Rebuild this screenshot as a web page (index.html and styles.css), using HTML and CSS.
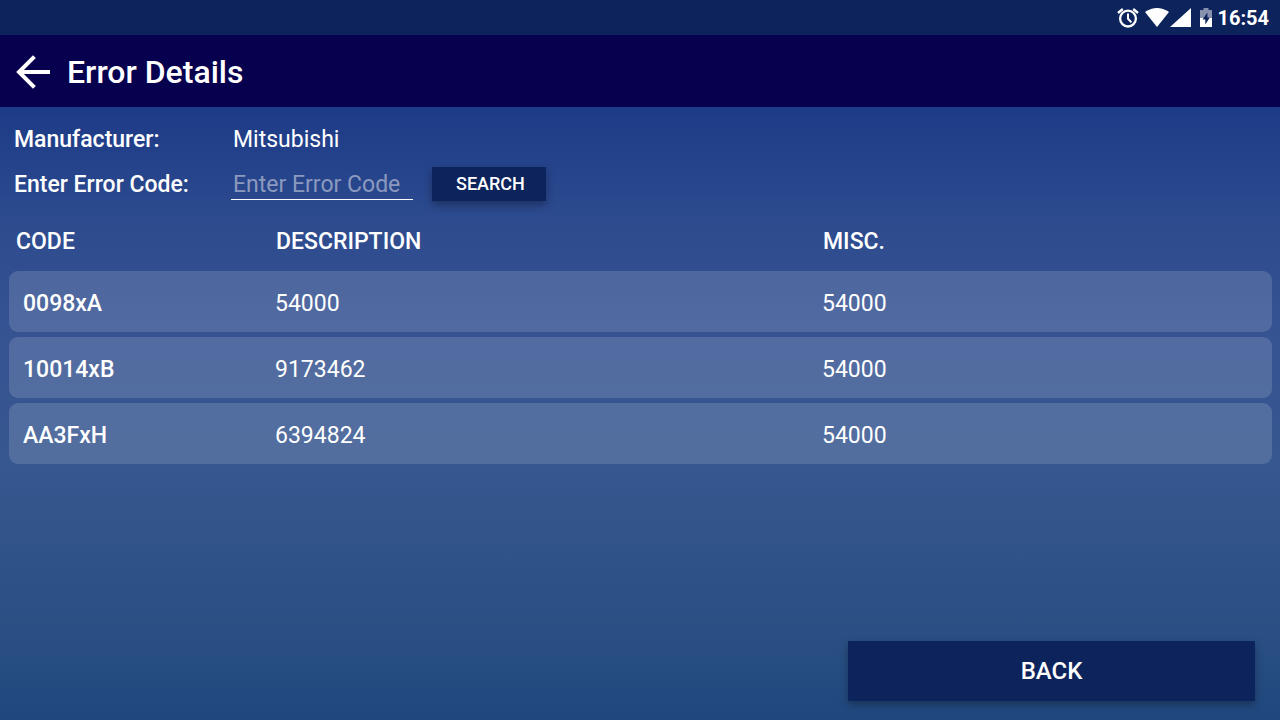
FILE: index.html
```html
<!DOCTYPE html>
<html lang="en">
<head>
<meta charset="utf-8">
<meta name="viewport" content="width=device-width, initial-scale=1">
<title>Error Details</title>
<link rel="stylesheet" href="styles.css">
</head>
<body>
<div class="screen">
  <div class="status-bar">
    <svg class="status-alarm" width="22" height="22" viewBox="0 0 22 22" fill="none" stroke="#fff" stroke-width="2.3" aria-hidden="true">
      <circle cx="11" cy="11.6" r="7.9"/>
      <path d="M11 6.6v5.2l3.4 3.6" stroke-width="2"/>
      <path d="M1 6 5.8 2M21 6 16.2 2"/>
    </svg>
    <svg class="status-wifi" width="24" height="19" viewBox="0 0 24 19" fill="#fff" aria-hidden="true">
      <path d="M0 4Q12-4 24 4L12 19z"/>
    </svg>
    <svg class="status-signal" width="21" height="19" viewBox="0 0 21 19" fill="#fff" aria-hidden="true">
      <path d="M21 0v19H0z"/>
    </svg>
    <svg class="status-battery" width="12" height="19" viewBox="0 0 12 19" aria-hidden="true">
      <path d="M0 2h3.5V0h5v2H12v8H0z" fill="#8691ad"/>
      <path d="M0 10h12v9H0z" fill="#fff"/>
      <path d="M7.4 4.6 2.6 11.4h2.7v5.2l4.5-7H7.4z" fill="#0c235b"/>
    </svg>
    <time>16:54</time>
  </div>
  <header class="app-bar">
    <button class="nav-back" type="button" aria-label="Go back">
      <svg width="34" height="34" viewBox="0 0 34 34" fill="none" stroke="#fff" stroke-width="4" aria-hidden="true">
        <path d="M34 17H3M18.4 1.6 3 17l15.4 15.4"/>
      </svg>
    </button>
    <h1>Error Details</h1>
  </header>
  <main class="content">
    <form class="lookup">
      <span class="label">Manufacturer:</span>
      <span class="value">Mitsubishi</span>
      <label class="label" for="error-code">Enter Error Code:</label>
      <div class="search">
        <input id="error-code" type="text" placeholder="Enter Error Code">
        <button class="button button-search" type="button">SEARCH</button>
      </div>
    </form>
    <table class="errors">
      <colgroup><col class="col-code"><col class="col-description"><col></colgroup>
      <thead>
        <tr><th scope="col">CODE</th><th scope="col">DESCRIPTION</th><th scope="col">MISC.</th></tr>
      </thead>
      <tbody>
        <tr><th scope="row">0098xA</th><td>54000</td><td>54000</td></tr>
        <tr><th scope="row">10014xB</th><td>9173462</td><td>54000</td></tr>
        <tr><th scope="row">AA3FxH</th><td>6394824</td><td>54000</td></tr>
      </tbody>
    </table>
    <footer class="actions">
      <button class="button button-back" type="button">BACK</button>
    </footer>
  </main>
</div>
</body>
</html>
```

FILE: styles.css
```css
* {
  box-sizing: border-box;
}

body {
  margin: 0;
  color: #fff;
  font-family: Roboto, "Liberation Sans", sans-serif;
  font-size: 23px;
  line-height: 28px;
}

button,
input {
  border: 0;
  border-radius: 0;
  color: inherit;
  font: inherit;
}

.screen {
  display: flex;
  flex-direction: column;
  min-height: 100vh;
}

.status-bar {
  display: flex;
  align-items: center;
  justify-content: flex-end;
  height: 35px;
  padding-right: 11px;
  background: #0c235b;
  font-size: 20px;
  font-weight: 700;
}

.status-alarm {
  margin-right: 6px;
}

.status-wifi {
  margin-right: 1px;
}

.status-signal {
  margin-right: 9px;
}

.status-battery {
  margin-right: 5px;
}

.app-bar {
  display: flex;
  align-items: center;
  gap: 17px;
  height: 72px;
  padding: 2px 16px 0;
  background: #06004f;
}

.nav-back {
  display: flex;
  padding: 0;
  background: none;
}

.app-bar h1 {
  margin: 0;
  font-size: 32px;
  font-weight: 500;
  line-height: 40px;
}

.content {
  display: flex;
  flex: 1;
  flex-direction: column;
  padding: 12px 8px 19px 9px;
  background: linear-gradient(#1d3b87, #2d4b8e 19%, #365392 38%, #36578f 58%, #2b5084 84%, #20487e);
}

.lookup {
  display: grid;
  grid-template-columns: 217px 1fr;
  row-gap: 8px;
  align-items: center;
  padding-left: 5px;
}

.label {
  padding-top: 2px;
  font-weight: 500;
}

.value {
  padding: 7px 0 5px 2px;
}

.search {
  display: flex;
  gap: 19px;
  align-items: center;
}

.search input {
  width: 182px;
  height: 32px;
  padding: 2px 2px 0;
  border-bottom: 1px solid #fff;
  background: none;
  outline: 0;
}

.search input::placeholder {
  color: #8c99bf;
  opacity: 1;
}

.button {
  background: #0c235b;
  box-shadow: 0 4px 8px rgb(0 0 0 / 30%);
  font-weight: 500;
}

.button-search {
  height: 34px;
  padding: 0 21px 0 24px;
  font-size: 18px;
}

.errors {
  width: 100%;
  margin-top: 17px;
  border-spacing: 0 5px;
  table-layout: fixed;
}

.col-code {
  width: 265px;
}

.col-description {
  width: 547px;
}

.errors th,
.errors td {
  padding: 4px 0 0 1px;
  text-align: left;
}

.errors th {
  font-weight: 500;
}

.errors thead th {
  height: 43px;
  padding: 0 0 5px 2px;
}

.errors thead th:first-child {
  padding-left: 7px;
}

.errors tbody th,
.errors tbody td {
  height: 61px;
  background: rgb(255 255 255 / 14%);
}

.errors tbody th {
  padding-left: 14px;
  border-radius: 9px 0 0 9px;
}

.errors tbody td:last-child {
  border-radius: 0 9px 9px 0;
}

.actions {
  display: flex;
  justify-content: flex-end;
  margin-top: auto;
  padding: 16px 17px 0 0;
}

.button-back {
  width: 407px;
  height: 60px;
  font-size: 24px;
}
```
